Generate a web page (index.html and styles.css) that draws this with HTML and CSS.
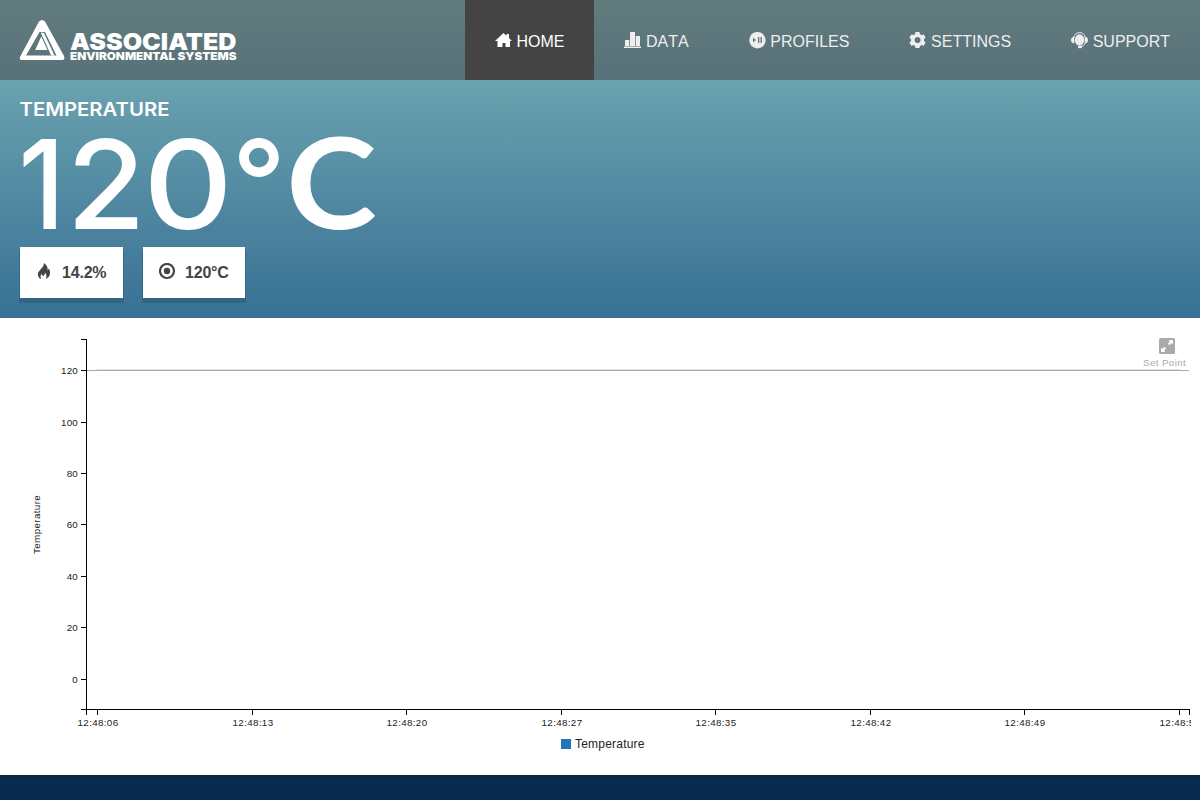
FILE: index.html
```html
<!DOCTYPE html>
<html lang="en">
<head>
<meta charset="utf-8">
<title>Associated Environmental Systems</title>
<link rel="stylesheet" href="styles.css">
</head>
<body>
<header class="header">
  <svg class="logo" width="220" height="44" viewBox="0 0 220 44">
    <path class="logo-ring" fill-rule="evenodd" d="M19 1.500Q22-1.500 25 1.500L44 36Q45.500 40 42 40H2Q-1.500 40 .5 36ZM19.500 12L6 35.500H36.500L25 12Z"/>
    <path d="M21.300 16.500L15.200 30H27.500ZM20.800 12.800H23.800L34.500 35.500H31.200Z"/>
    <text class="logo-name" x="50" y="29.700" textLength="166.500" lengthAdjust="spacingAndGlyphs">ASSOCIATED</text>
    <text class="logo-sub" x="50" y="39.900" textLength="166.500" lengthAdjust="spacingAndGlyphs">ENVIRONMENTAL SYSTEMS</text>
  </svg>
  <nav class="nav">
    <a class="nav-item active"><svg class="icon" viewBox="0 0 17 17"><path d="M8.500 1L11.500 3.800V2H14V6L17 9H15V15H10.500V11H7.500V15H2.500V9H0Z"/></svg><span>HOME</span></a>
    <a class="nav-item"><svg class="icon" viewBox="0 0 17 17"><path d="M1 8H5.300V14H1ZM6 0H11V14H6ZM11.700 4H16V14H11.700ZM0 14.500H17V16H0Z"/></svg><span>DATA</span></a>
    <a class="nav-item"><svg class="icon" viewBox="0 0 17 17"><path fill-rule="evenodd" d="M8.500 0A8.200 8.200 0 1 1 8.400 0ZM4 5.800V10.200L7 8ZM9 5V11H10.300V5ZM11.500 5V11H12.800V5Z"/></svg><span>PROFILES</span></a>
    <a class="nav-item"><svg class="icon" viewBox="0 0 17 17"><path fill-rule="evenodd" d="M6.600 0H10.400L11 2.200L12.500 3L14.700 2.400L16.600 5.600L15 7.200V8.900L16.600 10.500L14.700 13.700L12.500 13.100L11 13.900L10.400 16.100H6.600L6 13.900L4.500 13.100L2.300 13.700L.4 10.500L2 8.900V7.200L.4 5.600L2.300 2.400L4.500 3L6 2.200ZM8.500 5A3.050 3.050 0 1 0 8.600 5Z"/></svg><span>SETTINGS</span></a>
    <a class="nav-item"><svg class="icon" viewBox="0 0 17 17"><ellipse cx="8.500" cy="8" rx="4.700" ry="5.800"/><path d="M3.300 4.500V11.500Q0 11 0 8T3.300 4.500ZM13.700 4.500V11.500Q17 11 17 8T13.700 4.500Z"/><path class="icon-line" d="M2.800 5.500Q4 .6 8.500 .6T14.200 5.500M14.300 11Q13 14.300 9.500 15"/><ellipse cx="9" cy="15" rx="2.200" ry="1.300"/></svg><span>SUPPORT</span></a>
  </nav>
</header>
<section class="hero">
  <svg class="reading" width="380" height="150" viewBox="0 0 380 150">
    <text class="reading-label" x="-.5" y="19" textLength="150" lengthAdjust="spacingAndGlyphs">TEMPERATURE</text>
    <g class="reading-value">
      <text transform="translate(-1.500 132) scale(.9 1)">1</text>
      <text transform="translate(46.800 132) scale(1.030 1)">2</text>
      <text transform="translate(123.200 132) scale(1.120 1)">0</text>
      <text transform="translate(211.900 126.500) scale(.95)">°</text>
      <text class="reading-unit" transform="translate(266.200 132) scale(1.077 1)">C</text>
    </g>
  </svg>
  <div class="cards">
    <div class="card"><svg class="card-icon" viewBox="0 0 17 17"><path d="M8 0Q8 3 4.500 6.500T2 12.500Q2.500 15.300 5 16Q4 12.500 5.500 10.500Q6 13 7.500 13Q9 11.500 9 9.500Q11.500 12.500 9.700 16Q14.500 14 14 9Q14 7 12.700 5.500L11.700 7.500Q12 2.500 8 0Z"/></svg><span>14.2%</span></div>
    <div class="card card-set"><svg class="card-icon" viewBox="0 0 17 17"><circle class="target" cx="8" cy="8" r="7"/><circle cx="8" cy="8" r="3.200"/></svg><span>120°C</span></div>
  </div>
</section>
<main class="chart">
  <svg class="plot" width="1191" height="457" viewBox="0 0 1191 457">
    <path class="series" d="M97 51.500H1180"/>
    <path class="setpoint" d="M87 52.500H1189"/>
    <path class="axis" d="M80.500 21.500H86.500V391.500H80.500M86.500 397V391.500H1189.500V397M80.500 52.500H86M80.500 104.500H86M80.500 155.500H86M80.500 206.500H86M80.500 258.500H86M80.500 309.500H86M80.500 361.500H86M97.500 391V397M252.500 391V397M406.500 391V397M561.500 391V397M715.500 391V397M870.500 391V397M1024.500 391V397M1179.500 391V397"/>
    <g class="ticks-y">
      <text x="78" y="56">120</text><text x="78" y="108">100</text><text x="78" y="159">80</text><text x="78" y="210">60</text><text x="78" y="262">40</text><text x="78" y="313">20</text><text x="78" y="365">0</text>
    </g>
    <g class="ticks-x">
      <text x="98" y="408">12:48:06</text><text x="253" y="408">12:48:13</text><text x="407" y="408">12:48:20</text><text x="562" y="408">12:48:27</text><text x="716" y="408">12:48:35</text><text x="871" y="408">12:48:42</text><text x="1025" y="408">12:48:49</text><text x="1180" y="408">12:48:56</text>
    </g>
    <text class="axis-title" transform="translate(40 206.500) rotate(-90)" textLength="59">Temperature</text>
    <text class="set-label" x="1143" y="48" textLength="43">Set Point</text>
    <rect class="expand" x="1159" y="20" width="16" height="16" rx="1.500"/>
    <path class="expand-arrows" d="M1168.500 22H1173V26.500L1171.600 25.100L1169.500 27.200L1167.800 25.500L1169.900 23.400ZM1161 29.500L1162.400 30.900L1164.500 28.800L1166.200 30.500L1164.100 32.600L1165.500 34H1161Z"/>
    <rect class="legend-swatch" x="561" y="421" width="10" height="10"/>
    <text class="legend" x="575" y="430" textLength="69.500">Temperature</text>
  </svg>
</main>
<footer class="footer"></footer>
</body>
</html>
```
FILE: styles.css
```css
* { box-sizing: border-box; }
body {
  margin: 0;
  height: 800px;
  overflow: hidden;
  display: flex;
  flex-direction: column;
  background: #fff;
  font-family: "Liberation Sans", Arial, sans-serif;
  font-size: 16px;
}
.header {
  height: 80px;
  flex: none;
  display: flex;
  justify-content: space-between;
  padding-left: 20px;
  background: linear-gradient(#617b7d, #59717a);
}
.logo { margin-top: 20px; fill: #fff; overflow: visible; }
.logo-name, .logo-sub { font-family: Inter, sans-serif; font-weight: 900; }
.logo-name { font-size: 23px; }
.logo-sub { font-size: 10.5px; }
.nav { display: flex; font-kerning: none; }
.nav-item {
  display: flex;
  align-items: center;
  gap: 4.600px;
  padding: 0 30px;
  color: #eee;
  white-space: nowrap;
}
.nav-item span { padding-top: 3px; }
.nav-item.active { background: #444; color: #fff; }
.icon { width: 17px; height: 17px; fill: currentColor; overflow: visible; }
.icon-line { fill: none; stroke: currentColor; stroke-width: 1; }
.hero {
  height: 238px;
  flex: none;
  padding: 17px 20px 0;
  background: linear-gradient(#6aa2af, #387095);
}
.reading { display: block; fill: #fff; overflow: visible; }
.reading-label, .reading-value { font-family: Inter, sans-serif; }
.reading-label { font-size: 18.500px; font-weight: 600; }
.reading-value { font-size: 124px; font-weight: 500; }
.reading-unit { font-family: Lato, sans-serif; font-size: 127px; font-weight: 700; }
.cards { display: flex; gap: 20px; }
.card {
  display: flex;
  align-items: center;
  gap: 9px;
  width: 103px;
  height: 51px;
  padding-left: 16px;
  background: #fff;
  color: #444;
  font-weight: bold;
  letter-spacing: -.2px;
  box-shadow: 0 4px 0 1px rgba(42, 88, 112, .5);
}
.card-set { width: 102px; }
.card-icon { width: 17px; height: 17px; flex: none; margin-top: -2px; fill: #444; }
.target { fill: none; stroke: #444; stroke-width: 2.200; }
.chart { height: 457px; flex: none; }
.plot { display: block; font-size: 9.800px; letter-spacing: .2px; fill: #222; }
.series { stroke: #d5e5f2; }
.setpoint { stroke: #aaa; }
.axis { fill: none; stroke: #000; shape-rendering: crispEdges; }
.ticks-y { text-anchor: end; }
.ticks-x, .axis-title { text-anchor: middle; }
.ticks-x { letter-spacing: .35px; }
.set-label, .expand { fill: #aaa; }
.expand-arrows { fill: #fff; }
.legend { font-size: 12px; letter-spacing: 0; }
.legend-swatch { fill: #1f77b4; }
.footer { flex: 1; background: #082b4e; box-shadow: inset 0 5px 3px -2px #082942; }
```
